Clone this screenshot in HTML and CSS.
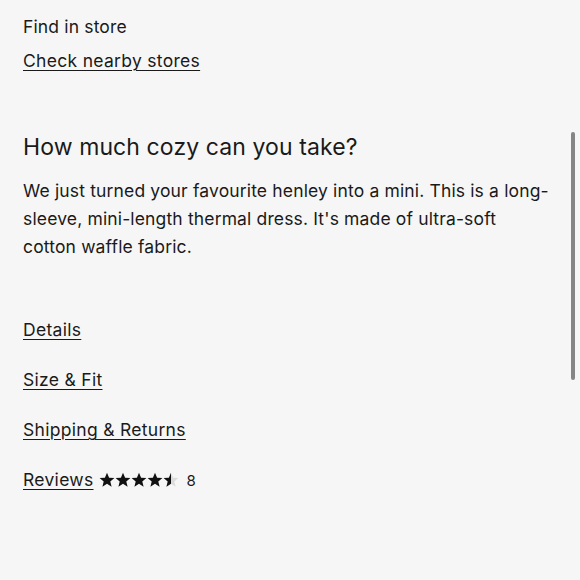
FILE: index.html
```html
<!DOCTYPE html>
<html lang="en">
<head>
<meta charset="utf-8">
<title>Product details</title>
<link rel="stylesheet" href="styles.css">
</head>
<body>
<main class="page">
  <section class="store">
    <p class="store-label">Find in store</p>
    <a class="link" href="#">Check nearby stores</a>
  </section>
  <section class="about">
    <h2 class="about-title">How much cozy can you take?</h2>
    <p class="about-text">We just turned your favourite henley into a mini. This is a long-sleeve, mini-length thermal dress. It's made of ultra-soft cotton waffle fabric.</p>
  </section>
  <nav class="sections">
    <a class="link" href="#">Details</a>
    <a class="link" href="#">Size &amp; Fit</a>
    <a class="link" href="#">Shipping &amp; Returns</a>
    <div class="reviews">
      <a class="link" href="#">Reviews</a>
      <span class="stars" aria-label="4.5 out of 5 stars">
        <svg viewBox="0 0 16 16" class="star"><path d="M8 .8l2.1 5 5.3.3-4.1 3.4 1.3 5.2L8 11.8l-4.6 2.9 1.3-5.2L.6 6.1l5.3-.3z"/></svg>
        <svg viewBox="0 0 16 16" class="star"><path d="M8 .8l2.1 5 5.3.3-4.1 3.4 1.3 5.2L8 11.8l-4.6 2.9 1.3-5.2L.6 6.1l5.3-.3z"/></svg>
        <svg viewBox="0 0 16 16" class="star"><path d="M8 .8l2.1 5 5.3.3-4.1 3.4 1.3 5.2L8 11.8l-4.6 2.9 1.3-5.2L.6 6.1l5.3-.3z"/></svg>
        <svg viewBox="0 0 16 16" class="star"><path d="M8 .8l2.1 5 5.3.3-4.1 3.4 1.3 5.2L8 11.8l-4.6 2.9 1.3-5.2L.6 6.1l5.3-.3z"/></svg>
        <svg viewBox="0 0 16 16" class="star"><path class="star-empty" d="M8 .8l2.1 5 5.3.3-4.1 3.4 1.3 5.2L8 11.8l-4.6 2.9 1.3-5.2L.6 6.1l5.3-.3z"/><path d="M8 .8V11.8l-4.6 2.9 1.3-5.2L.6 6.1l5.3-.3z"/></svg>
      </span>
      <span class="count">8</span>
    </div>
  </nav>
</main>
<div class="scrollbar"></div>
</body>
</html>
```
FILE: styles.css
```css
html, body {
  margin: 0;
  padding: 0;
  background: #f6f6f6;
}
body {
  width: 580px;
  height: 580px;
  overflow: hidden;
  font-family: Inter, "Noto Sans", sans-serif;
  color: #1a1a1a;
  position: relative;
}
.page {
  padding: 14px 23px 0 23px;
}
.store {
  display: flex;
  flex-direction: column;
  align-items: flex-start;
  gap: 8px;
}
.store-label {
  margin: 0;
  font-size: 17.5px;
  line-height: 26px;
  letter-spacing: 0.15px;
}
.link {
  color: #1a1a1a;
  font-size: 17.5px;
  line-height: 26px;
  letter-spacing: 0.3px;
  text-decoration: underline;
  text-underline-offset: 3px;
  text-decoration-thickness: 1px;
}
.about {
  margin-top: 58px;
}
.about-title {
  margin: 0;
  font-size: 23px;
  font-weight: 400;
  line-height: 30px;
  letter-spacing: 0.1px;
}
.about-text {
  margin: 15px 0 0;
  font-size: 17.5px;
  line-height: 28px;
  letter-spacing: 0.15px;
  max-width: 531px;
}
.sections {
  margin-top: 56px;
  display: flex;
  flex-direction: column;
  align-items: flex-start;
  gap: 24px;
}
.reviews {
  display: flex;
  align-items: center;
  gap: 5px;
}
.stars {
  display: flex;
  gap: 0;
}
.star {
  width: 16px;
  height: 16px;
  fill: #111;
}
.star-empty {
  fill: #dcdcdc;
}
.count {
  margin-left: 3px;
  font-size: 15px;
}
.scrollbar {
  position: absolute;
  left: 571px;
  top: 132px;
  width: 4px;
  height: 248px;
  border-radius: 2px;
  background: #858585;
}
```
